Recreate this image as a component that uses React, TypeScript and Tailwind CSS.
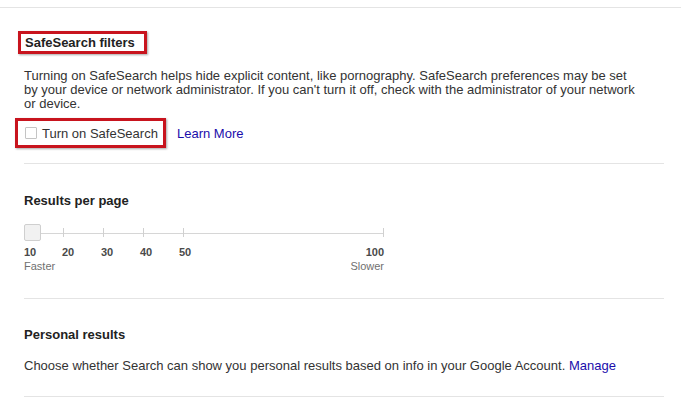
import React from "react";

const ticks = [20, 30, 40, 50, 100];

function Slider() {
  return (
    <div className="relative w-[360px] h-[17px]">
      <svg className="absolute left-0 top-0" width="361" height="17" viewBox="0 0 361 17">
        <line x1="17" y1="9.5" x2="360" y2="9.5" stroke="#d6d6d6" strokeWidth="1" />
        {ticks.map((t) => {
          const x = (t - 10) * 4 - 0.5;
          return <line key={t} x1={x} y1="4" x2={x} y2="13" stroke="#d0d0d0" strokeWidth="1" />;
        })}
      </svg>
      <div className="absolute left-0 top-0 w-[17px] h-[17px] rounded-[2px] border border-[#cfcfcf] bg-[#f1f1f1]" />
    </div>
  );
}

export default function App() {
  return (
    <div
      className="w-[681px] h-[400px] bg-white overflow-hidden text-[#222]"
      style={{ fontFamily: '"Liberation Sans", Arial, sans-serif' }}
    >
      <div className="h-[7px]" />
      <div className="h-px bg-[#e4e4e4]" />

      <div className="pl-[24px] pr-[17px]">
        {/* SafeSearch */}
        <div className="pt-[22px]">
          <div className="ml-[-6px] inline-flex items-center h-[23px] w-[129px] border-[3px] border-[#c8141e] pl-[4px] shadow-[1px_1px_2px_rgba(0,0,0,0.35)]">
            <span className="text-[13px] leading-[15px] font-bold text-[#222]">SafeSearch filters</span>
          </div>
          <p className="mt-[15px] text-[13px] leading-[14px] text-[#333] whitespace-nowrap">
            Turning on SafeSearch helps hide explicit content, like pornography. SafeSearch preferences may be set
            <br />
            by your device or network administrator. If you can't turn it off, check with the administrator of your network
            <br />
            or device.
          </p>
          <div className="mt-[7px] flex items-center">
            <div className="ml-[-9px] flex items-center h-[30px] w-[151px] border-[3px] border-[#c8141e] pl-[7px] shadow-[1px_1px_2px_rgba(0,0,0,0.35)]">
              <span className="w-[12px] h-[12px] border border-[#c4c4c4] rounded-[1px] bg-white" />
              <span className="ml-[5px] text-[13px] leading-[15px] text-[#333]">Turn on SafeSearch</span>
            </div>
            <span className="ml-[11px] text-[13px] leading-[15px] text-[#1a0dab]">Learn More</span>
          </div>
          <div className="mt-[15px] h-px bg-[#e4e4e4]" />
        </div>

        {/* Results per page */}
        <div className="pt-[29px]">
          <div className="text-[13px] leading-[15px] font-bold text-[#222]">Results per page</div>
          <div className="mt-[16px]">
            <Slider />
          </div>
          <div className="mt-[4px] w-[360px] flex text-[11px] leading-[14px] font-bold text-[#4a4a4a]">
            <span className="w-[38px]">10</span>
            <span className="w-[39px]">20</span>
            <span className="w-[39px]">30</span>
            <span className="w-[39px]">40</span>
            <span className="w-[39px]">50</span>
            <span className="ml-auto">100</span>
          </div>
          <div className="w-[360px] flex justify-between text-[11px] leading-[14px] text-[#707070]">
            <span>Faster</span>
            <span>Slower</span>
          </div>
          <div className="mt-[25px] h-px bg-[#e4e4e4]" />
        </div>

        {/* Personal results */}
        <div className="pt-[28px]">
          <div className="text-[13px] leading-[15px] font-bold text-[#222]">Personal results</div>
          <p className="mt-[16px] text-[13px] leading-[15px] text-[#333]">
            Choose whether Search can show you personal results based on info in your Google Account.{" "}
            <span className="text-[#1a0dab]">Manage</span>
          </p>
          <div className="mt-[23px] h-px bg-[#e4e4e4]" />
        </div>
      </div>
    </div>
  );
}
